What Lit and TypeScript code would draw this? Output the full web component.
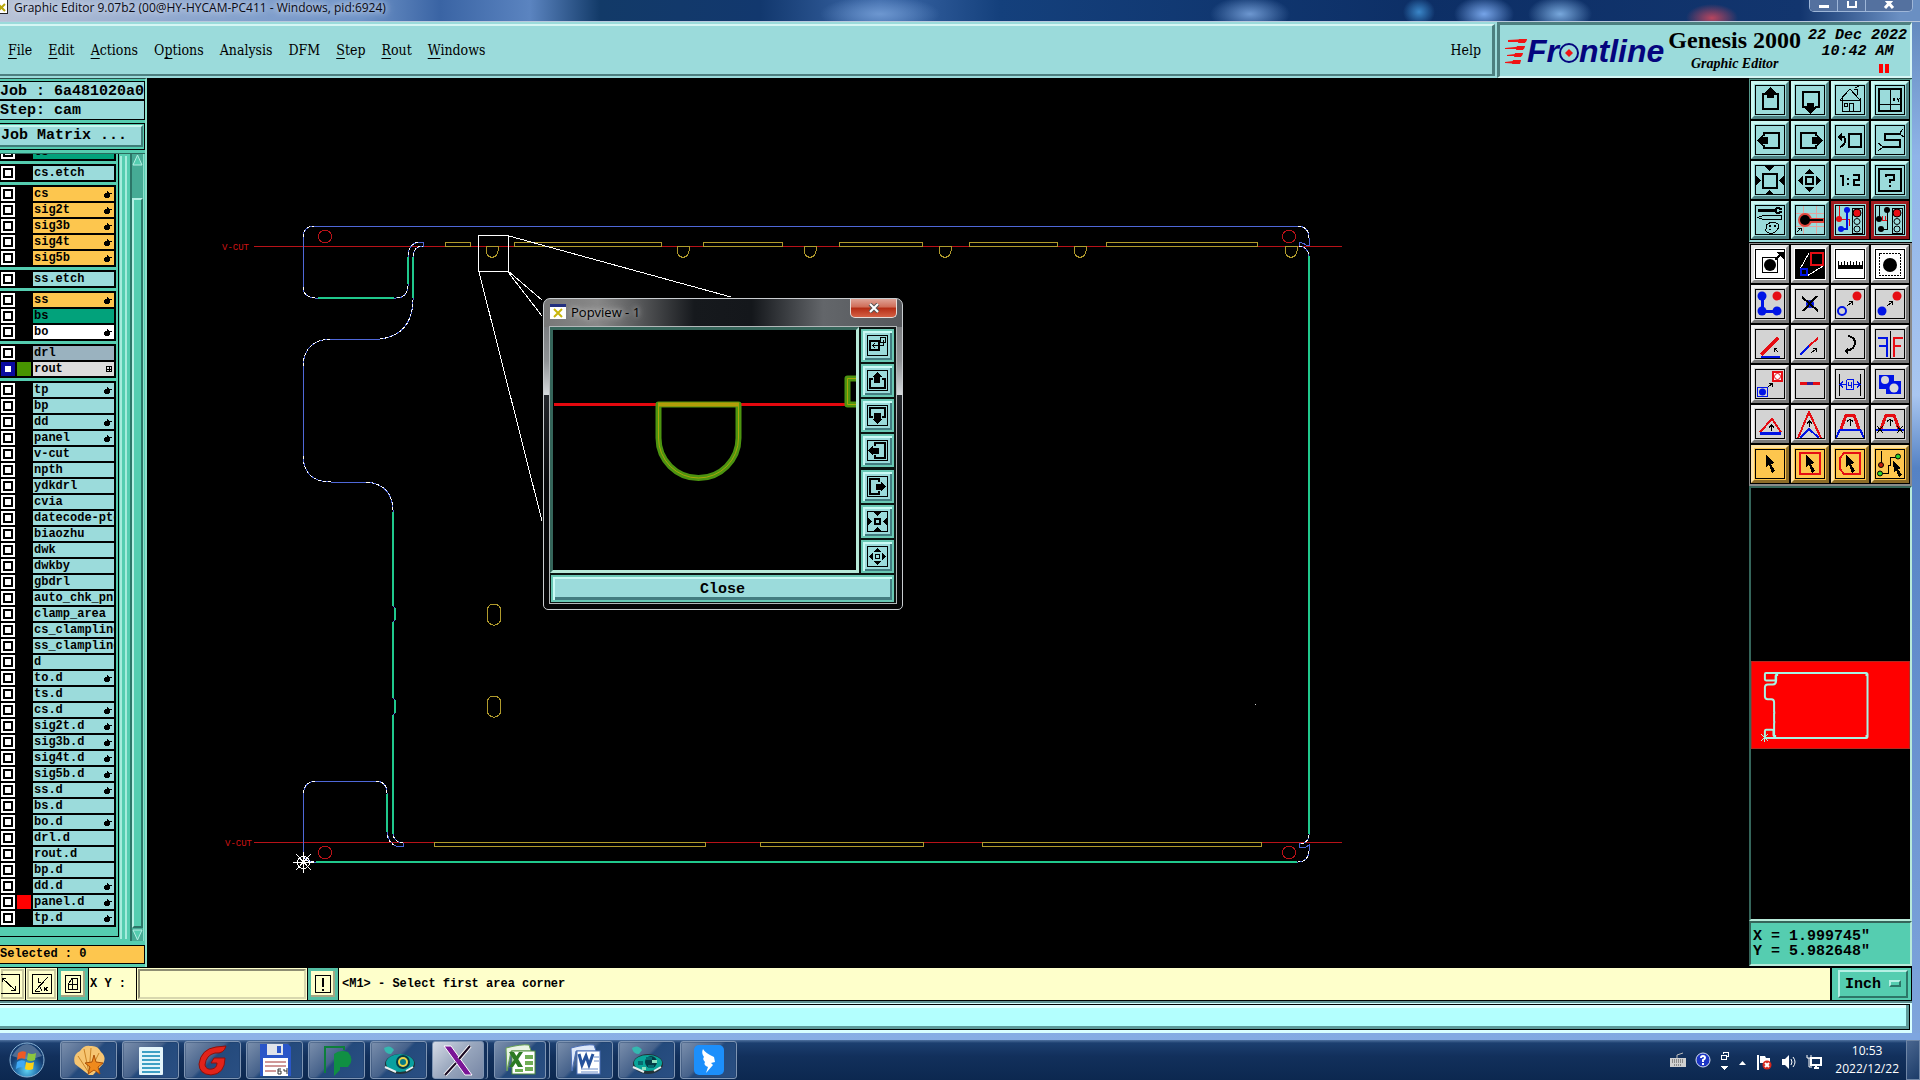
import { LitElement, html, css, svg, nothing } from "lit";
import { customElement } from "lit/decorators.js";

const K = "#000";
const R = "#e60d14";
const B = "#0014e6";

/* ---------- tool palette icons, 30 x 30 grid ---------- */
const tool: Record<string, unknown> = {
  up: svg`<path d="M12 9H8V24H23V9H19" fill="none" stroke=${K} stroke-width="2"/><path d="M15.500 2L21 8H19V13H12V8H10Z"/>`,
  down: svg`<path d="M12 22H8V7H24V22H20" fill="none" stroke=${K} stroke-width="2"/><path d="M12 18H19V22H22L15.500 29L9 22H12Z"/>`,
  home: svg`<path d="M5 15L15 4L25 15M7 13V26H25V13M5 15H26M19 4H22V10M14 26V18H18V26M9 18H12V21H9ZM20 3L24 1" fill="none" stroke=${K}/>`,
  grid: svg`<rect x="4" y="4" width="22" height="22" fill="none" stroke=${K} stroke-width="2"/><path d="M4 19.500H26M15.500 4V26M18 13l2 3M20 13l-2 3M22 13l1 2 2-2M23 15v2" fill="none" stroke=${K}/>`,
  left: svg`<path d="M9 11V8H24V23H9V20" fill="none" stroke=${K} stroke-width="2"/><path d="M2 15.500L8 10V12H13V19H8V21Z"/>`,
  right: svg`<path d="M21 11V8H6V23H21V20" fill="none" stroke=${K} stroke-width="2"/><path d="M28 15.500L22 10V12H17V19H22V21Z"/>`,
  back: svg`<rect x="14" y="9" width="12" height="13" fill="none" stroke=${K} stroke-width="2"/><path d="M5 12H8Q10 12 10 16T5 22" fill="none" stroke=${K} stroke-width="2"/><path d="M2 12L7 8V16Z"/>`,
  snake: svg`<path d="M26 9H10V15H25V22H7" fill="none" stroke=${K} stroke-width="2"/><path d="M25 8l3-4M26 10l3 2M7 21l-4-3M7 23l-4 3" stroke=${K} fill="none"/>`,
  zoomin: svg`<rect x="8" y="9" width="14" height="14" fill="none" stroke=${K} stroke-width="2"/><path d="M10 1H19L14.500 6ZM10 30H19L14.500 25ZM1 11V20L6 15.500ZM29 11V20L24 15.500Z"/>`,
  zoomout: svg`<rect x="11" y="12" width="7" height="7" fill="none" stroke=${K} stroke-width="2"/><path d="M10 9H19L14.500 4ZM10 22H19L14.500 27ZM8 11V20L3 15.500ZM21 11V20L26 15.500Z"/>`,
  ratio: svg`<path d="M5 11H8V21M18 10H24V15H19V20H25" fill="none" stroke=${K} stroke-width="2"/><path d="M12 13h2v2h-2zM12 18h2v2h-2z"/>`,
  help: svg`<rect x="4" y="4" width="22" height="22" fill="none" stroke=${K} stroke-width="2"/><path d="M11 12V10H19V15H15V18M15 20V22" fill="none" stroke=${K} stroke-width="2"/>`,
  setup: svg`<path d="M3 5H21" stroke=${K} stroke-width="3"/><path d="M27 4L22 3L20 5L22 8L27 7" fill="none" stroke=${K} stroke-width="2"/><path d="M3 12.500L8 10.500H26V14.500H8ZM11 20Q18 15 23 19Q25 25 18 28Q10 29 11 24Z" fill="none" stroke=${K}/><path d="M14 20h2v2h-2zM19 20h2v2h-2zM14 24h2v1h-2z"/>`,
  snap: svg`<path d="M0 8.500H30M0 21.500H30M8.500 0V30M21.500 0V30" stroke="#e2a5a0" fill="none"/><circle cx="10" cy="15" r="7" fill="#e0453c"/><path d="M12 15H29" stroke="#e0453c" stroke-width="5"/><circle cx="10" cy="15" r="5"/><path d="M12 15H28" stroke=${K} stroke-width="2"/><path d="M2 27L6 23M3 23H6V26" stroke=${K} fill="none"/>`,
  netA: svg`<path d="M4 1V14H8M5 14H14V21" stroke=${R} fill="none"/><path d="M12 5V24H6" stroke=${B} fill="none" stroke-width="2"/><circle cx="4" cy="14" r="3" fill=${R}/><circle cx="12" cy="5" r="3" fill=${B}/><circle cx="6" cy="24" r="3" fill=${B}/><rect x="17.500" y="3.500" width="10" height="25" fill="none" stroke=${K}/><circle cx="22" cy="8" r="4" fill=${R} stroke=${K}/><circle cx="22" cy="16.500" r="3" fill="none" stroke=${K}/><circle cx="22" cy="24" r="3" fill="none" stroke=${K}/>`,
  netB: svg`<path d="M4.500 1V14M12.500 5V24H6" stroke=${K} fill="none"/><circle cx="4" cy="14" r="3"/><circle cx="12" cy="5" r="3"/><circle cx="6" cy="24" r="3"/><path d="M7 11V15M10 11V15M7 15H12" stroke=${R} fill="none"/><rect x="17.500" y="3.500" width="10" height="25" fill="none" stroke=${K}/><circle cx="22" cy="8" r="4" fill=${R} stroke=${K}/><circle cx="22" cy="16.500" r="3" fill="none" stroke=${K}/><circle cx="22" cy="24" r="3" fill="none" stroke=${K}/>`,
  select: svg`<rect x="7.500" y="8.500" width="15" height="15" fill="none" stroke=${K}/><circle cx="15" cy="16" r="6"/><path d="M20 11L26 5" stroke=${K} stroke-width="2"/><path d="M21 3H29V10Z"/>`,
  popview: svg`<rect x="1" y="1" width="28" height="28"/><path d="M5 20L14 4M12 27L28 17" stroke="#fff" fill="none"/><rect x="16" y="4" width="12" height="12" fill="none" stroke=${R} stroke-width="2"/><rect x="6" y="20" width="6" height="6" fill="none" stroke=${B} stroke-width="2"/>`,
  ruler: svg`<path d="M3 12H4V16H6V13H7V16H9V12H10V16H12V13H13V16H15V12H16V16H18V13H19V16H21V12H22V16H24V13H25V16H27V12H28V20H3Z"/>`,
  area: svg`<rect x="4.500" y="4.500" width="21" height="22" fill="none" stroke=${K} stroke-dasharray="2 1"/><circle cx="15" cy="16" r="7"/>`,
  chain: svg`<path d="M7 7V22H22" stroke=${B} stroke-width="3" fill="none"/><circle cx="7" cy="7" r="4.500" fill=${B}/><circle cx="7" cy="22" r="4.500" fill=${B}/><circle cx="22" cy="22" r="4.500" fill=${B}/><circle cx="22" cy="7" r="4.500" fill=${R}/>`,
  remove: svg`<circle cx="15" cy="15" r="4" fill=${B}/><path d="M7 8L23 22M22 7L8 22" stroke=${K} stroke-width="2"/>`,
  copy: svg`<circle cx="7" cy="22" r="4" fill="none" stroke=${B} stroke-width="2"/><circle cx="22" cy="7" r="4.500" fill=${R}/><path d="M12 17L17 13M14 12.500H17.500V16" stroke=${K} fill="none"/>`,
  move: svg`<circle cx="7" cy="22" r="4.500" fill=${B}/><circle cx="22" cy="7" r="4.500" fill=${R}/><path d="M12 17L17 13M14 12.500H17.500V16" stroke=${K} fill="none"/>`,
  rotate: svg`<path d="M6 26L23 9" stroke=${R} stroke-width="3"/><path d="M6 28H25" stroke=${B} stroke-width="2"/><path d="M23 23L19 19M19 23V19.500H22" stroke=${K} fill="none"/>`,
  extend: svg`<path d="M5 26L14 17" stroke=${B} stroke-width="2"/><path d="M14 17L23 9" stroke=${R} stroke-width="2"/><path d="M16 24L21 20M18 19.500H21.500V23" stroke=${K} fill="none"/>`,
  turn: svg`<path d="M13 7Q20 8 20 14T11 22" fill="none" stroke=${K} stroke-width="2"/><path d="M9 22L13 18V26Z"/>`,
  mirror: svg`<path d="M15.500 2V29" stroke=${K}/><path d="M12 28V9H3M12 17H4" fill="none" stroke=${B} stroke-width="2"/><path d="M19 28V9H28M19 17H26" fill="none" stroke=${R} stroke-width="2"/>`,
  resize: svg`<rect x="18" y="3" width="9" height="9" fill="#fff" stroke=${R} stroke-width="2"/><circle cx="22.500" cy="7.500" r="3" fill="none" stroke=${R}/><rect x="2.500" y="18.500" width="10" height="9" fill="none" stroke=${B}/><circle cx="7.500" cy="23" r="3.500" fill=${B}/><path d="M13 18L17 15M14 14.500H17.500V18" stroke=${K} fill="none"/>`,
  segment: svg`<path d="M5 14H25" stroke=${R} stroke-width="3"/><path d="M12 14H18" stroke="#33209a" stroke-width="3"/>`,
  spacing: svg`<path d="M4.500 5V27M25.500 5V27" stroke=${K}/><path d="M5 15.500H11M19 15.500H25M8 12.500L5 15.500L8 18.500M22 12.500L25 15.500L22 18.500M12 10.500H18.500V20.500H11.500V10.500M13.500 13V16.500H17M16.500 13V19" stroke=${B} fill="none"/>`,
  merge: svg`<path d="M4 6H19V12H26V25H11V20H4Z" fill=${B}/><circle cx="10" cy="11" r="4" fill="#d9d9d9"/><circle cx="19" cy="19" r="4.500" fill="#d9d9d9"/>`,
  triA: svg`<path d="M5 23L17 10L26 23" stroke=${R} fill="none" stroke-width="2"/><path d="M5 24H26" stroke=${B} stroke-width="3"/><path d="M16.500 22V17M14 18.500L16.500 16L19 18.500" stroke=${K} fill="none"/>`,
  triB: svg`<path d="M3 29L14 3L26 29" stroke=${R} fill="none" stroke-width="2"/><path d="M5 29L14 20L24 29" stroke=${B} fill="none" stroke-width="2"/><path d="M14.500 18V12M12 14.500L14.500 12L17 14.500" stroke=${K} fill="none"/>`,
  trapA: svg`<path d="M6 20L11 6H19L24 20" stroke=${R} fill="none" stroke-width="3"/><path d="M1 29L5 20.500H25L29 29" stroke=${B} fill="none" stroke-width="2"/><path d="M15 17V10M12 12.500L15 10L18 12.500" stroke=${K} fill="none"/>`,
  trapB: svg`<path d="M6 20L11 6H19L24 20" stroke=${R} fill="none" stroke-width="3"/><path d="M1 20.500H29" stroke=${B} fill="none" stroke-width="2"/><path d="M15 17V10M12 12.500L15 10L18 12.500M2 17L8 24M8 17L2 24M22 17L28 24M28 17L22 24" stroke=${K} fill="none"/>`,
  pick: svg`<path d="M11 6L19 14L16 15L20 22L17 24L14 16L11 18Z"/>`,
  pickRect: svg`<rect x="5" y="4" width="20" height="21" fill="none" stroke=${R} stroke-width="2"/><path d="M11 6L19 14L16 15L20 22L17 24L14 16L11 18Z"/>`,
  pickPoly: svg`<path d="M9 4H25V25H9L5 20V9Z" fill="none" stroke=${R} stroke-width="2"/><path d="M11 6L19 14L16 15L20 22L17 24L14 16L11 18Z"/>`,
  pickNet: svg`<path d="M6.500 2V15M6 24.500H13V16H15.500V8H22" fill="none" stroke=${K}/><circle cx="6" cy="16" r="2.500" fill="#c0200c" stroke=${K}/><circle cx="5" cy="24.500" r="2.500" fill="#2bd32b" stroke=${K}/><circle cx="23" cy="7.500" r="2.500" fill="#2bd32b" stroke=${K}/><path d="M18 12L26 19L23 20L27 26L24 28L21 21L19 23Z"/>`,
};

const VIEW_TOOLS: [string, string, string][] = [
  ["up", "Pan up", "cy"], ["down", "Pan down", "cy"], ["home", "Home", "cy"], ["grid", "Coordinate window", "cy"],
  ["left", "Pan left", "cy"], ["right", "Pan right", "cy"], ["back", "Previous view", "cy"], ["snake", "Serpentine", "cy"],
  ["zoomin", "Zoom in", "cy"], ["zoomout", "Zoom out", "cy"], ["ratio", "Scale 1:2", "cy"], ["help", "Query", "cy"],
  ["setup", "Setup", "cy"], ["snap", "Snap", "cy"], ["netA", "Online DRC", "rd"], ["netB", "Net check", "rd"],
];
const EDIT_TOOLS: [string, string, string][] = [
  ["select", "Select", "wh"], ["popview", "Popview", "wh"], ["ruler", "Measure", "wh"], ["area", "Area", "wh"],
  ["chain", "Add feature", "gy"], ["remove", "Delete", "gy"], ["copy", "Copy", "gy"], ["move", "Move", "gy"],
  ["rotate", "Rotate", "gy"], ["extend", "Extend", "gy"], ["turn", "Turn", "gy"], ["mirror", "Mirror", "gy"],
  ["resize", "Resize", "gy"], ["segment", "Segment", "gy"], ["spacing", "Spacing", "gy"], ["merge", "Merge", "gy"],
  ["triA", "Move corner", "gy"], ["triB", "Stretch corner", "gy"], ["trapA", "Parallel move", "gy"], ["trapB", "Parallel cut", "gy"],
  ["pick", "Pick single", "or"], ["pickRect", "Pick in frame", "or"], ["pickPoly", "Pick in polygon", "or"], ["pickNet", "Pick net", "or"],
];

/* ---------- popview icons, 21 x 21 grid ---------- */
const POP_TOOLS: [string, unknown][] = [
  ["Copy view", svg`<rect x="3" y="6" width="9" height="9" fill="none" stroke=${K} stroke-width="2"/><path d="M13.500 2.500H18.500V7.500H13.500ZM16.500 5V10.500H6M8 8L5.500 10.500L8 13" fill="none" stroke=${K}/>`],
  ["Pan up", svg`<path d="M6 9H3V18H18V9H15" fill="none" stroke=${K} stroke-width="2"/><path d="M10.500 2L15 7H13V13H7V7H6Z"/>`],
  ["Pan down", svg`<path d="M6 12H3V3H18V12H15" fill="none" stroke=${K} stroke-width="2"/><path d="M7 8H14V14H16L10.500 19L5 14H7Z"/>`],
  ["Pan left", svg`<path d="M8 6V3H18V18H8V15" fill="none" stroke=${K} stroke-width="2"/><path d="M1 10.500L6 6V8H12V14H6V16Z"/>`],
  ["Pan right", svg`<path d="M12 6V3H3V18H12V15" fill="none" stroke=${K} stroke-width="2"/><path d="M19 10.500L14 6V8H9V14H14V16Z"/>`],
  ["Zoom in", svg`<rect x="8" y="8" width="5" height="5" fill="none" stroke=${K} stroke-width="2"/><path d="M6 1H15L10.500 5ZM6 20H15L10.500 16ZM1 6V15L5 10.500ZM20 6V15L16 10.500Z"/>`],
  ["Zoom out", svg`<rect x="8.500" y="8.500" width="4" height="4" fill="none" stroke=${K}/><path d="M7 6H14L10.500 2ZM7 15H14L10.500 19ZM6 7V14L2 10.500ZM15 7V14L19 10.500Z"/>`],
];

/* ---------- layers: [name, tone, mark, swatch] ---------- */
type Layer = [string, string, string?, string?];
const LAYERS: Layer[][] = [
  [["ts", "green"]],
  [["cs.etch", ""]],
  [["cs", "amber", "hand"], ["sig2t", "amber", "hand"], ["sig3b", "amber", "hand"], ["sig4t", "amber", "hand"], ["sig5b", "amber", "hand"]],
  [["ss.etch", ""]],
  [["ss", "amber", "hand"], ["bs", "green"], ["bo", "white", "hand"]],
  [["drl", "slate"], ["rout", "grey", "grid", "olive"]],
  [
    ["tp", "", "hand"], ["bp", ""], ["dd", "", "hand"], ["panel", "", "hand"], ["v-cut", ""], ["npth", ""], ["ydkdrl", ""],
    ["cvia", ""], ["datecode-ptc", ""], ["biaozhu", ""], ["dwk", ""], ["dwkby", ""], ["gbdrl", ""], ["auto_chk_pnl", ""],
    ["clamp_area", ""], ["cs_clampline", ""], ["ss_clampline", ""], ["d", ""], ["to.d", "", "hand"], ["ts.d", ""],
    ["cs.d", "", "hand"], ["sig2t.d", "", "hand"], ["sig3b.d", "", "hand"], ["sig4t.d", "", "hand"], ["sig5b.d", "", "hand"],
    ["ss.d", "", "hand"], ["bs.d", ""], ["bo.d", "", "hand"], ["drl.d", ""], ["rout.d", ""], ["bp.d", ""],
    ["dd.d", "", "hand"], ["panel.d", "", "hand", "red"], ["tp.d", "", "hand"],
  ],
];

/* ---------- board geometry ---------- */
const BOARD =
  "M314 226H1298Q1309 227 1309 238V245H1306Q1303 242 1299 243V246Q1308 247 1309 256V835Q1308 844 1299 844V847H1306L1309 845V851Q1308 862 1298 862H314Q303 862 303 852V793Q305 782 315 781H376Q387 782 387 793V833Q389 843 396 846H403V843Q394 842 393 834V715L395 713V700L393 698V622L395 620V608L393 606V510Q392 484 366 482H331Q304 482 303 456V366Q304 340 331 339H380Q412 335 413 300V256Q414 246 423 246V242H418Q408 245 408 256V286Q407 298 396 298H315Q303 297 303 287V237Q303 227 314 226Z";
const BOARD_ARCS =
  "M303 237Q303 227 314 226M1298 226Q1309 227 1309 238M1299 246Q1308 247 1309 256M1309 835Q1308 844 1299 844M1309 851Q1308 862 1298 862M314 862Q303 862 303 852M303 793Q305 782 315 781M376 781Q387 782 387 793M387 835Q389 843 396 846M403 843Q394 842 393 834M393 510Q392 484 366 482M331 482Q304 482 303 456M303 366Q304 340 331 339M380 339Q412 335 413 300M413 256Q414 246 423 246M418 242Q408 245 408 256M408 286Q407 298 396 298M315 298Q303 297 303 287";
const BOARD_GREEN =
  "M1309 256V834M387 794V832M393 834V715M395 713V700M393 698V622M395 620V608M393 606V512M413 298V257M408 257V284M318 298H394M316 862H1297";

const TOP_BARS = [[445, 470], [514, 661], [703, 782], [839, 922], [969, 1057], [1106, 1257]];
const BOTTOM_BARS = [[434, 705], [760, 923], [982, 1261]];
const HALF_SLOTS = [492, 683, 810, 945, 1080, 1291];

/* ---------- taskbar ---------- */
const TASKS: [string, unknown, string?][] = [
  ["Shell", svg`<path d="M17 32L3 21Q0 12 8 8Q12 2 18 3Q26 2 29 9Q35 14 31 21L21 32Z" fill="#f6c572"/><path d="M17 30L6 13M17 30L12 6M17 30L19 5M17 30L27 10" stroke="#c98325" fill="none"/><path d="M22 12L24 19L31 20L26 24L28 31L22 27L16 31L18 24L13 20L20 19Z" fill="#ef8a1c" stroke="#a84f08"/>`],
  ["Notepad", svg`<rect x="5" y="4" width="24" height="28" rx="1" fill="#e4f5fb"/><path d="M8 9H26M8 13H26M8 17H26M8 21H26M8 25H26M8 29H26" stroke="#3f9fc4" stroke-width="2"/>`],
  ["Genesis", svg`<path d="M30 3Q28 11 19 10Q10 12 9 22Q10 27 16 26Q21 25 21 20H15L18 15H29Q29 31 15 32Q3 31 3 21Q5 6 20 4Z" fill="#e2231a" stroke="#8d100c"/>`],
  ["Disk", svg`<path d="M2 1H30L33 4V33H2Z" fill="#2a56c8"/><rect x="9" y="1" width="16" height="11" fill="#dfe3ea"/><rect x="19" y="3" width="4" height="7" fill="#2a56c8"/><rect x="5" y="15" width="25" height="18" fill="#fff"/><path d="M7 19H28M7 23H28M7 28H18" stroke="#a03030"/><path d="M20 26H23M20 26V31H23V28H20M26 26V28H29M29 25V31" stroke="#333" fill="none"/>`],
  ["Plot", svg`<path d="M5 30V4H24V7" fill="none" stroke="#0d7f3b" stroke-width="2"/><path d="M14 33V11Q20 6 28 9Q35 17 28 24H20V27Z" fill="#108f43"/>`],
  ["InCAM", svg`<ellipse cx="18" cy="21" rx="15" ry="10" fill="#243238"/><ellipse cx="18" cy="20" rx="14" ry="9" fill="#0aa0a0"/><circle cx="21" cy="19" r="7" fill="#043c48"/><circle cx="21" cy="19" r="5" fill="#e8d44a"/><circle cx="21" cy="19" r="3" fill="#067b86"/><path d="M2 5Q8 1 12 7L9 11Q3 11 2 5Z" fill="#35b8b0"/><path d="M3 24L14 29M24 28L31 24" stroke="#e8eef0" stroke-width="2"/>`],
  ["Xming", svg`<path d="M3 3H10L31 32H24Z" fill="#7a1596" stroke="#fff"/><path d="M29 3L18 16M15 20L4 32" stroke="#fff" stroke-width="4"/><path d="M29 3L18 16M15 20L4 32" stroke="#1a0a22" stroke-width="2"/>`, "active"],
  ["Excel", svg`<path d="M3 5Q18 1 26 2L28 8H8L4 28Z" fill="#e8f3e4" stroke="#6aa355"/><rect x="9" y="8" width="23" height="23" fill="#fff" stroke="#4c8d3a"/><path d="M6 9H11L20 24H15ZM16 9H20L10 24H6Z" fill="#2c7a22"/><path d="M22 12H30V16H22ZM22 18H30V22H22ZM22 24H30V28H22ZM12 26H20V29H12Z" fill="#6fae55"/>`, "stack"],
  ["Word", svg`<path d="M3 5Q18 1 26 2L28 8H8L4 28Z" fill="#dde8f8" stroke="#4c70b8"/><rect x="9" y="8" width="23" height="23" fill="#fff" stroke="#4c70b8"/><path d="M11 11L14 22L18 13L21 22L25 11" fill="none" stroke="#26529c" stroke-width="3"/><path d="M26 14H31M26 18H31M13 26H30M13 29H30" stroke="#6a8cc8"/>`],
  ["InCAM two", svg`<ellipse cx="18" cy="21" rx="15" ry="10" fill="#243238"/><ellipse cx="18" cy="20" rx="14" ry="8" fill="#0aa59a"/><circle cx="21" cy="19" r="6" fill="#043c48"/><path d="M8 18h5v4h-5zM16 14h6v3h-6zM18 22h6v3h-6z" fill="#066a70"/><path d="M22 17h5v3h-5zM12 24h4v3h-4z" fill="#8ce0c0"/><path d="M3 24L14 29M24 28L31 24" stroke="#e8eef0" stroke-width="2"/><path d="M2 5Q8 1 12 7L9 11Q3 11 2 5Z" fill="#35b8b0"/>`],
  ["DingTalk", svg`<rect x="2" y="2" width="30" height="30" rx="5" fill="#1c8ffb"/><path d="M11 6Q13 10 22 14L23 19L19 20L21 22L14 30L16 24Q11 22 13 19Q10 16 12 14Q9 10 11 6Z" fill="#fff"/>`],
];

const bevel = css`
  * { box-sizing: border-box; }
  button, select, input { font: inherit; color: inherit; margin: 0; padding: 0; border-radius: 0; }
  svg { display: block; }
  .crisp { shape-rendering: crispEdges; }
`;

@customElement("app-header")
class AppHeader extends LitElement {
  static styles = [bevel, css`
    :host { display: flex; flex: none; height: 56px; background: #9bdbdb; font-family: "DejaVu Serif Condensed", "Liberation Serif", serif; color: #000; }
    .menus { flex: 1; display: flex; align-items: center; gap: 16px; padding: 0 11px 0 8px; border-top: 2px solid #d6f6f4; border-right: 3px solid #4d7f80; border-bottom: 2px solid #4d7f80; margin: 2px 2px 2px 0; }
    .menus button { border: 0; background: none; font-size: 14px; line-height: 18px; white-space: nowrap; }
    .menus u { text-underline-offset: 3px; text-decoration-thickness: 1px; }
    .menus .help { margin-left: auto; }
    .brand { width: 415px; flex: none; display: flex; align-items: center; padding: 0 3px 0 5px; border: 2px solid #d6f6f4; border-top: 3px solid #4d7f80; border-left: 3px solid #4d7f80; }
    .logo { display: flex; align-items: center; color: #05057e; font: italic bold 32px/36px "Liberation Sans", sans-serif; }
    .product { display: flex; flex-direction: column; align-items: center; padding: 0 4px 2px; white-space: nowrap; font-family: "Liberation Serif", serif; font-weight: bold; }
    .name { font-size: 24px; line-height: 28px; }
    .sub { font-size: 14px; line-height: 20px; font-style: italic; }
    .time { display: flex; flex-direction: column; align-items: center; font: italic bold 15px/16px "Liberation Mono", monospace; white-space: nowrap; margin-left: auto; }
    .pause { display: flex; gap: 2px; align-self: flex-end; margin: 4px 18px 0 0; }
    .pause i { width: 4px; height: 9px; background: #f00; }
  `];
  render() {
    const menus = [["", "F", "ile"], ["", "E", "dit"], ["", "A", "ctions"], ["O", "p", "tions"], ["Analysis", "", ""], ["DFM", "", ""], ["", "S", "tep"], ["", "R", "out"], ["", "W", "indows"]];
    return html`
      <nav class="menus">
        ${menus.map(([a, u, b]) => html`<button>${a}${u ? html`<u>${u}</u>` : nothing}${b}</button>`)}
        <button class="help">Help</button>
      </nav>
      <div class="brand">
        <div class="logo">
          <svg width="22" height="26" viewBox="0 0 22 26"><path d="M3 2L22 1L21 4L3 4ZM0 10L20 8L19 11L0 11ZM2 17L18 15L17 18L2 18ZM0 24L16 22L15 26L0 25Z" fill="#f01414"/><path d="M14 1H22L20 5H13ZM12 8H20L18 12H11ZM10 15H18L16 19H9ZM8 22H16L14 26H7Z" fill="#f01414"/></svg>
          <span>Fr</span>
          <svg width="20" height="24" viewBox="0 0 20 24"><circle cx="10" cy="14" r="9" fill="none" stroke="#05057e" stroke-width="2"/><path d="M10 10L14 14L10 18L6 14Z" fill="#f01414"/></svg>
          <span>ntline</span>
        </div>
        <div class="product"><span class="name">Genesis 2000</span><span class="sub">Graphic Editor</span></div>
        <div class="time"><span>22 Dec 2022</span><span>10:42 AM</span><span class="pause"><i></i><i></i></span></div>
      </div>`;
  }
}

@customElement("layer-panel")
class LayerPanel extends LitElement {
  static styles = [bevel, css`
    :host { display: flex; flex-direction: column; width: 147px; flex: none; background: #55cdb0; border-right: 2px solid #8ee0cc; border-top: 1px solid #2b4f4a; padding: 2px 0 3px; font: bold 15px/19px "Liberation Mono", monospace; color: #000; overflow: hidden; white-space: nowrap; }
    .job { display: flex; flex-direction: column; border: 1px solid #000; border-left: 0; background: #9bdbdb; }
    .job span { height: 18px; border-bottom: 1px solid #000; }
    .job span + span { border-top: 1px solid #000; border-bottom: 0; height: 19px; }
    .matrix { margin-top: 3px; border: 1px solid #000; border-left: 0; padding: 1px 1px 2px 0; }
    .matrix button { display: block; width: 100%; height: 22px; text-align: left; padding-left: 1px; background: #9bdbdb; border: 2px solid; border-color: #c9f5ef #3f7d78 #3f7d78 #c9f5ef; border-left: 0; font-weight: bold; line-height: 18px; }
    .body { flex: 1; min-height: 0; display: flex; margin-top: 3px; border-top: 1px solid #2b6a5e; }
    .list { width: 119px; border-right: 1px solid #000; border-bottom: 1px solid #000; margin-bottom: 4px; overflow: hidden; font-size: 12px; line-height: 14px; }
    .group { width: 116px; background: #000; padding: 2px 2px 0 1px; margin-bottom: 3px; }
    .group:first-child { margin-top: -11px; }
    .row { display: flex; gap: 2px; padding-bottom: 2px; height: 16px; }
    .row input { appearance: none; width: 14px; height: 14px; border: 2px solid #fff; outline: 2px solid #000; outline-offset: -4px; background: #fff; flex: none; }
    .row input:checked { border-color: #0a0aa0; outline-color: #0a0aa0; }
    .swatch { width: 14px; height: 14px; flex: none; }
    .olive { background: #479400; } .red { background: #f00; }
    .row label { flex: 1; min-width: 0; overflow: hidden; display: flex; justify-content: space-between; align-items: center; background: #9bdbdb; padding: 0 0 0 1px; height: 14px; }
    .row label span { min-width: 0; }
    .row .amber { background: #fdc64e; } .row .green { background: #02a27b; } .row .white { background: #fff; } .row .slate { background: #9ab2bf; } .row .grey { background: #dcdcdc; }
    .row svg { flex: none; margin-right: 2px; }
    .gutter { width: 7px; margin: 2px 0 2px 1px; border-left: 2px solid #a5ecdc; border-right: 2px solid #a5ecdc; }
    .scroll { width: 14px; margin-left: auto; margin-right: 1px; display: flex; flex-direction: column; background: #46ab95; border-left: 2px solid #2c7668; border-right: 1px solid #8ee0cc; }
    .thumb { flex: 1; margin-top: 32px; background: #55cdb0; border: 2px solid; border-color: #b5f0e4 #2c7668 #2c7668 #b5f0e4; }
    .selected { margin-top: 4px; height: 19px; border: 1px solid #000; border-left: 0; background: #fdc64e; font-size: 12px; line-height: 17px; }
  `];
  render() {
    const hand = html`<svg class="crisp" width="8" height="8" viewBox="0 0 8 8"><path d="M3 1h1v1h1v1h3v1H6v3H5v1H1V7H0V4h1V3h2z"/></svg>`;
    const grid = html`<svg class="crisp" width="6" height="6" viewBox="0 0 6 6"><path d="M0 0H6V6H0ZM1 1V2.500H2.500V1ZM3.500 1V2.500H5V1ZM1 3.500V5H2.500V3.500ZM3.500 3.500V5H5V3.500Z" fill-rule="evenodd"/></svg>`;
    return html`
      <div class="job"><span>Job : 6a481020a0</span><span>Step: cam</span></div>
      <div class="matrix"><button>Job Matrix ...</button></div>
      <div class="body">
        <div class="list">
          ${LAYERS.map((g) => html`<div class="group">${g.map(([name, tone, mark, sw]) => html`
            <div class="row"><input type="checkbox" id="l-${name}" .checked=${name === "rout"}><i class="swatch ${sw ?? ""}"></i><label class=${tone} for="l-${name}"><span>${name}</span>${mark === "hand" ? hand : mark ? grid : nothing}</label></div>`)}</div>`)}
        </div>
        <div class="gutter"></div>
        <div class="scroll">
          <svg width="11" height="12" viewBox="0 0 11 12"><path d="M5.500 1L10 11H1Z" fill="#55cdb0" stroke="#b5f0e4"/></svg>
          <div class="thumb"></div>
          <svg width="11" height="13" viewBox="0 0 11 13"><path d="M5.500 12L10 2H1Z" fill="#55cdb0" stroke="#b5f0e4"/></svg>
        </div>
      </div>
      <div class="selected">Selected : 0</div>`;
  }
}

@customElement("pop-view")
class PopView extends LitElement {
  static styles = [bevel, css`
    :host { display: flex; flex-direction: column; width: 360px; height: 312px; border: 1px solid #c9cdd0; border-radius: 7px 7px 5px 5px; overflow: hidden; padding: 0 5px 5px; color: #000;
      background: linear-gradient(90deg, #777 0, #888 15%, #16191d 42%, #14171b 58%, #63666a 78%, #55585c 100%) top / 100% 28px no-repeat, linear-gradient(#6a6d70 0, #8f9295 20%, #d6dadd 31%, #d6dadd 31%, #23262b 31%, #08090b 60%, #050506 100%); }
    .title { height: 27px; flex: none; display: flex; align-items: center; gap: 5px; padding: 0 0 2px 1px; font: 13px/16px "Open Sans", "Noto Sans", sans-serif; }
    .title span { flex: 1; text-shadow: 0 0 5px #ccc, 0 0 8px #bbb; }
    .x { align-self: flex-start; width: 47px; height: 19px; background: linear-gradient(#dfa396, #cf6c57 45%, #b42c14 50%, #d56044); border: 1px solid #e6dcd8; border-top: 0; border-radius: 0 0 5px 5px; display: grid; place-items: center; }
    .frame { flex: 1; min-height: 0; display: flex; flex-direction: column; gap: 2px; background: #0a1512; border: 1px solid #b4b8ba; padding: 0 2px 1px 0; }
    .mid { flex: 1; min-height: 0; display: flex; gap: 2px; }
    .view { flex: 1; background: #000; border: 3px solid; border-color: #35655a #b7ead9 #b7ead9 #35655a; }
    .tools { display: flex; flex-direction: column; justify-content: space-between; padding-top: 2px; }
    .tools button { width: 33px; height: 33px; background: #9bdbdb; border: 2px solid #69c8b4; box-shadow: inset 2px 2px #c9faf5, inset -2px -2px #437c80; padding: 4px; display: grid; place-items: center; }
    .tools svg { outline: 1px solid #000; outline-offset: -1px; }
    .close { height: 27px; margin-left: 1px; padding-top: 2px; background: #9bdbdb; border: 2px solid #69c8b4; box-shadow: inset 2px 2px #c9faf5, inset -2px -3px #437c80; font: bold 15px/20px "Liberation Mono", monospace; }
  `];
  render() {
    return html`
      <div class="title">
        <svg width="16" height="15" viewBox="0 0 16 15"><rect width="16" height="15" fill="#fff"/><rect width="16" height="3" fill="#23307e"/><path d="M4 5L12 13M12 5L4 13" stroke="#c9b60c" stroke-width="2"/></svg>
        <span>Popview - 1</span>
        <button class="x" aria-label="Close window"><svg width="12" height="10" viewBox="0 0 12 10"><path d="M2 1L10 9M10 1L2 9" stroke="#555" stroke-width="4"/><path d="M2 1L10 9M10 1L2 9" stroke="#fff" stroke-width="2"/></svg></button>
      </div>
      <div class="frame">
        <div class="mid">
          <div class="view">
            <svg width="100%" height="100%">
              <path d="M1 74.500H600" stroke="#e4080e" stroke-width="3"/>
              <path d="M105.500 74.500H185.500V108A40 40 0 0 1 105.500 108Z" fill="none" stroke="#4c9410" stroke-width="6" stroke-linejoin="round"/>
              <path d="M105 74.500H186" stroke="#b89a08" stroke-width="4"/>
              <path d="M105.500 74.500H185.500V108A40 40 0 0 1 105.500 108Z" fill="none" stroke="#a8a408"/>
              <path d="M305 48.500H294.500V74.500H305" fill="none" stroke="#4c9410" stroke-width="6" stroke-linejoin="round"/>
              <path d="M305 48.500H294.500V74.500H305" fill="none" stroke="#a8a408"/>
            </svg>
          </div>
          <div class="tools">${POP_TOOLS.map(([n, i]) => html`<button aria-label=${n}><svg class="crisp" width="21" height="21" viewBox="0 0 21 21">${i}</svg></button>`)}</div>
        </div>
        <button class="close">Close</button>
      </div>`;
  }
}

@customElement("board-stage")
class BoardStage extends LitElement {
  static styles = [bevel, css`
    :host { display: block; flex: 1; min-width: 0; position: relative; background: #000; overflow: hidden; }
    .art { position: absolute; inset: 0; width: 100%; height: 100%; }
    .cut { font: 9px "Liberation Mono", monospace; fill: #d01414; }
    pop-view { position: absolute; left: 396px; top: 220px; }
  `];
  render() {
    return html`
      <svg class="art crisp">
        <g transform="translate(-147 -78)" fill="none">
          <path d="M254 246.500H1342M254 842.500H1342" stroke="#b81218"/>
          <text class="cut" x="222" y="250">V-CUT</text>
          <text class="cut" x="225" y="846">V-CUT</text>
          ${[[325, 236.5], [1289, 236.5], [325, 852.5], [1289, 852.5]].map(([x, y]) => svg`<circle cx=${x} cy=${y} r="6.500" stroke="#b81218"/>`)}
          <path d=${BOARD} stroke="#4f68d8"/>
          <path d=${BOARD_ARCS} stroke="#fff" stroke-dasharray="3 2"/>
          <path d=${BOARD_GREEN} stroke="#20c88c" stroke-width="2"/>
          ${TOP_BARS.map(([a, b]) => svg`<rect x=${a} y="242.500" width=${b - a} height="4" stroke="#b09a2c"/>`)}
          ${BOTTOM_BARS.map(([a, b]) => svg`<rect x=${a} y="842.500" width=${b - a} height="4" stroke="#b09a2c"/>`)}
          ${HALF_SLOTS.map((x) => svg`<path d="M${x - 6} 246.500H${x + 6}V251Q${x + 5} 257 ${x} 257.500Q${x - 5} 257 ${x - 6} 251Z" stroke="#b09a2c"/>`)}
          <rect x="487.500" y="604" width="13" height="21" rx="6" stroke="#b09a2c"/>
          <rect x="487.500" y="696" width="13" height="21" rx="6" stroke="#b09a2c"/>
          <rect x="478.500" y="235.500" width="30" height="36" stroke="#fff"/>
          <path d="M509 236L731 297M479 272L542 521M508 271L542 300M508 272L542 316" stroke="#fff"/>
          <path d="M293 862.500H314M303.500 852V873M296 854L311 870M311 854L296 870" stroke="#fff"/>
          <circle cx="303.500" cy="862.500" r="6" stroke="#fff"/>
          <rect x="1255" y="704" width="1" height="1" fill="#ccc"/>
        </g>
      </svg>
      <pop-view></pop-view>`;
  }
}

@customElement("tool-dock")
class ToolDock extends LitElement {
  static styles = [bevel, css`
    :host { display: flex; flex-direction: column; width: 163px; flex: none; background: #000; border-top: 1px solid #2b4f4a; font: bold 15px/15px "Liberation Mono", monospace; color: #000; }
    .pad { display: grid; grid-template-columns: repeat(4, 38px); gap: 2px; background: #000; padding: 1px; border: 1px solid #55998c; border-right: 2px solid #9bdbdb; border-bottom: 2px solid #9bdbdb; }
    .pad.edit { border-color: #8a8a8a; margin-top: 1px; }
    .pad button { width: 38px; height: 38px; border: 3px solid; display: grid; place-items: center; }
    .pad svg { outline: 1px solid #000; outline-offset: -1px; }
    circle { shape-rendering: auto; }
    .cy { background: #9bdbdb; border-color: #caf7f2 #4f8284 #4f8284 #caf7f2 !important; }
    .rd { background: #9bdbdb; border-color: #a31c20 #8e1418 #8e1418 #a31c20 !important; }
    .wh { background: #fff; border-color: #e8e8e8 #909090 #909090 #e8e8e8 !important; }
    .gy { background: #d3d3d3; border-color: #f2f2f2 #7a7a7a #7a7a7a #f2f2f2 !important; }
    .or { background: #fdc64e; border-color: #ffe3a4 #8c6c28 #8c6c28 #ffe3a4 !important; }
    .preview { flex: 1; display: flex; align-items: center; padding-top: 2px; border: 2px solid; border-color: #35655a #b7ead9 #b7ead9 #35655a; background: #000; }
    .preview div { width: 100%; height: 88px; background: #f00; outline: 1px solid #b02a20; outline-offset: -1px; }
    .coords { height: 45px; margin-bottom: 1px; background: #55cdb0; border: 2px solid; border-color: #35655a #b7ead9 #b7ead9 #35655a; padding: 6px 2px; white-space: nowrap; display: flex; flex-direction: column; }
  `];
  private pad(list: [string, string, string][]) {
    return list.map(([id, label, tone]) => html`<button class=${tone} aria-label=${label}><svg class="crisp" width="30" height="30" viewBox="0 0 30 30">${tool[id]}</svg></button>`);
  }
  render() {
    return html`
      <div class="pad">${this.pad(VIEW_TOOLS)}</div>
      <div class="pad edit">${this.pad(EDIT_TOOLS)}</div>
      <div class="preview"><div>
        <svg width="159" height="88" viewBox="0 0 159 88">
          <g fill="none" stroke="#a8f4e4" stroke-width="2" transform="translate(-17 -11) scale(0.102)"><path d=${BOARD} vector-effect="non-scaling-stroke"/></g>
          <path d="M10 73L17 80M17 73L10 80M13.500 71V81" stroke="#a8f4e4" fill="none"/>
        </svg></div></div>
      <div class="coords"><span>X = 1.999745"</span><span>Y = 5.982648"</span></div>`;
  }
}

@customElement("status-row")
class StatusRow extends LitElement {
  static styles = [bevel, css`
    :host { display: block; flex: none; background: #000; color: #000; font: bold 12px/16px "Liberation Mono", monospace; }
    .line { display: flex; height: 34px; padding: 1px 0; gap: 1px; background: #000; white-space: nowrap; }
    .sq { width: 31px; flex: none; display: grid; place-items: center; background: #feffcb; border: 1px solid #feffcb; box-shadow: inset 0 0 0 2px #c9c9a0; }
    .sq.first { width: 25px; justify-content: start; }
    .sq.on { border: 3px solid #55bfa4; width: 30px; box-shadow: inset -2px -2px #a5a583; }
    .xy { width: 47px; background: #feffcb; padding: 8px 1px 0; flex: none; }
    .entry { width: 170px; height: 32px; background: #feffcb; border: 3px solid; border-color: #8e8e72 #d8d8ae #d8d8ae #8e8e72; outline: 1px solid #feffcb; outline-offset: -1px; padding-left: 4px; }
    .msg { flex: 1; background: #feffcb; padding: 8px 3px; }
    .unit { width: 79px; display: flex; background: #55cdb0; padding: 2px 3px 2px 6px; margin: 0 1px; position: relative; }
    .unit select { appearance: none; flex: 1; background: #55cdb0; border: 2px solid; border-color: #b5f0e4 #2c7668 #2c7668 #b5f0e4; padding: 1px 0 0 5px; font-size: 15px; font-weight: bold; }
    .unit i { position: absolute; right: 10px; top: 12px; width: 12px; height: 7px; border: 2px solid; border-color: #b5f0e4 #2c7668 #2c7668 #b5f0e4; pointer-events: none; }
    .strip { height: 32px; border-top: 2px solid #5f8f90; padding: 1px 2px 3px 0; background: #d8ffff; }
    .strip div { height: 26px; background: #b3fffe; border: 1px solid #000; border-left: 0; box-shadow: inset -3px -3px #5f9a9a, inset 0 3px #e0ffff; }
  `];
  render() {
    return html`
      <div class="line">
        <button class="sq first" aria-label="Line mode"><svg class="crisp" width="21" height="22" viewBox="0 0 21 22"><path d="M-1 1.500H18.500V20.500H-1M1 5L14 17M1 9V5H5M14 13V17H10" fill="none" stroke="#000"/></svg></button>
        <button class="sq" aria-label="Angle mode"><svg class="crisp" width="20" height="22" viewBox="0 0 20 22"><path d="M0.500 1.500H19.500V20.500H0.500ZM3 18L16 4M3 18H8M8 14L10 18M6 5V9H9M12 14V18M16 14L13 16L16 18" fill="none" stroke="#000"/></svg></button>
        <button class="sq on" aria-label="Grid mode"><svg class="crisp" width="18" height="20" viewBox="0 0 18 20"><path d="M1.500 1.500H16.500V18.500H1.500ZM4 10.500L8 4.500H13.500V15.500H4ZM8.500 4V16M4 10.500H14" fill="none" stroke="#000"/></svg></button>
        <label class="xy" for="xy">X Y :</label>
        <input class="entry" id="xy" value="">
        <button class="sq on" aria-label="Alert"><svg class="crisp" width="18" height="20" viewBox="0 0 18 20"><path d="M1.500 1.500H16.500V18.500H1.500Z" fill="none" stroke="#000"/><path d="M8 4H10V13H8ZM8 15H10V17H8Z"/></svg></button>
        <div class="msg">&lt;M1&gt; - Select first area corner</div>
        <div class="unit"><select aria-label="Units"><option>Inch</option><option>MM</option></select><i></i></div>
      </div>
      <div class="strip"><div></div></div>`;
  }
}

@customElement("task-bar")
class TaskBar extends LitElement {
  static styles = [bevel, css`
    :host { display: flex; height: 40px; flex: none; align-items: stretch; background: linear-gradient(#4f719e 0, #1c3f70 3px, #12305c 40%, #0c2850 100%); color: #fff; font: 12px/18px "Open Sans", "Noto Sans", sans-serif; }
    .start { width: 60px; border: 0; background: none; padding: 2px 0 0 8px; }
    .tasks { flex: 1; display: flex; gap: 5px; padding: 1px 0; }
    .tasks button { width: 57px; display: grid; place-items: center; border: 1px solid #7f95b3; border-radius: 3px; background: linear-gradient(135deg, #7c90ad 0, #46628b 45%, #244a7c 50%, #2a4f83 100%); box-shadow: inset 0 0 0 1px #18365f55; }
    .tasks .active { width: 52px; margin-right: 5px; background: linear-gradient(135deg, #d5dbe6, #98a6bd 50%, #7686a5); box-shadow: 3px 0 #12305c, 4px 0 #7f95b3; }
    .tasks .stack { width: 52px; margin-right: 5px; box-shadow: 3px 0 #12305c, 4px 0 #7f95b3; }
    .tray { display: flex; align-items: center; gap: 9px; padding: 2px 13px 0 0; }
    .clock { display: flex; flex-direction: column; align-items: center; padding: 2px 7px 0 0; }
    .peek { width: 14px; border: 1px solid #6f86a6; background: linear-gradient(135deg, #4a668f, #1c3c69); padding: 0; }
  `];
  render() {
    return html`
      <button class="start" aria-label="Start"><svg width="38" height="38" viewBox="0 0 38 38">
        <defs><radialGradient id="orb" cx="50%" cy="80%"><stop offset="0" stop-color="#5fd4f4"/><stop offset="0.600" stop-color="#2675b0"/><stop offset="1" stop-color="#143c70"/></radialGradient></defs>
        <circle cx="19" cy="18" r="17" fill="url(#orb)" stroke="#8cb6d8"/><path d="M4 14Q19 -10 34 14Q19 20 4 14Z" fill="#fff" opacity="0.250"/>
        <path d="M10 11Q14 8 18 10L17 17Q13 15 9 18Z" fill="#ee5a24"/><path d="M20 11Q24 13 28 11L27 18Q23 20 19 18Z" fill="#8cc63f"/><path d="M9 20Q13 17 17 19L16 26Q12 24 8 27Z" fill="#3fa9f5"/><path d="M18 20Q22 22 26 20L25 27Q21 29 17 27Z" fill="#fcd116"/></svg></button>
      <div class="tasks">${TASKS.map(([n, i, c]) => html`<button class=${c ?? ""} aria-label=${n}><svg width="34" height="34" viewBox="0 0 34 34">${i}</svg></button>`)}</div>
      <div class="tray">
        <svg width="16" height="20" viewBox="0 0 16 20"><path d="M0 7H16V16H0Z" fill="#d0d0d0"/><path d="M2 9H14M2 11H14M4 14H12" stroke="#444" stroke-dasharray="1 1"/><path d="M7 7V4L13 2" stroke="#bbb" fill="none"/></svg>
        <svg width="16" height="20" viewBox="0 1 16 20"><circle cx="8" cy="10" r="7" fill="#1c35c4" stroke="#d8e0f0"/><path d="M6 8Q6 6 8 6T10 8Q10 9 8 10V12M8 13V15" stroke="#fff" stroke-width="2" fill="none"/></svg>
        <svg class="crisp" width="9" height="20" viewBox="0 0 9 20"><path d="M3 3V1H8V5H6M1 4H6V8H1Z" stroke="#fff" fill="none"/><path d="M1 15H8L4.500 19Z" fill="#fff"/></svg>
        <svg width="9" height="16" viewBox="0 0 9 16"><path d="M1 12H8L4.500 8Z" fill="#fff"/></svg>
        <svg width="16" height="18" viewBox="0 0 16 18"><path d="M2 3V18" stroke="#fff" stroke-width="2"/><path d="M4 4H9L10 6H14V11H4Z" fill="#fff"/><circle cx="11" cy="13" r="4.500" fill="#d8281c"/><path d="M9 11L13 15M13 11L9 15" stroke="#fff" stroke-width="2"/></svg>
        <svg width="16" height="16" viewBox="0 0 16 16"><path d="M1 6H4L8 2V16L4 12H1Z" fill="#fff"/><path d="M10 6Q12 9 10 12M12 4Q16 9 12 14" stroke="#fff" fill="none"/></svg>
        <svg width="16" height="16" viewBox="0 0 16 16"><path d="M5 5H15V12H5ZM8 15H13M10 12V15" stroke="#fff" stroke-width="2" fill="none"/><path d="M1 2V5H5V2M3 5V14H6" stroke="#fff" fill="none"/></svg>
      </div>
      <div class="clock"><span>10:53</span><span>2022/12/22</span></div>
      <button class="peek" aria-label="Show desktop"></button>`;
  }
}

@customElement("app-root")
class AppRoot extends LitElement {
  static styles = [bevel, css`
    :host { display: flex; flex-direction: column; min-height: 100vh; background: #000; }
    .window { flex: 1; display: flex; flex-direction: column; padding: 0 8px 7px 0;
      background: linear-gradient(90deg, #8fb4e8, #7ea6e0) bottom / 100% 7px no-repeat, linear-gradient(#5d84b8 0, #8fb4e8 15%, #a9c6f0 38%, #5582c4 45%, #7fa5dc 100%) right / 8px 100% no-repeat; }
    .title { height: 22px; flex: none; display: flex; align-items: flex-start; gap: 6px; margin-right: -8px; overflow: hidden; border-bottom: 1px solid #b8c8dc;
      background: radial-gradient(ellipse 16px 14px at 1419px 12px, #3a86c8 0, transparent 100%), radial-gradient(ellipse 30px 18px at 1484px 14px, #76a4e8 0, transparent 100%), radial-gradient(ellipse 32px 18px at 1560px 14px, #78a8dc 0, transparent 100%), radial-gradient(ellipse 26px 14px at 1712px 18px, #b8455e 0, transparent 100%), radial-gradient(ellipse 60px 18px at 880px 14px, #6d97d0 0, transparent 100%), radial-gradient(ellipse 40px 18px at 1250px 14px, #6d97d0 0, transparent 100%),
        linear-gradient(90deg, #b9c3d6 0, #8fa8cf 180px, #6f94c8 360px, #3a64a4 440px, #5b84c0 530px, #123a68 600px, #12386e 760px, #3c68a8 880px, #14407c 1000px, #0d2f66 1420px, #12356e 1800px, #6a8fc2 1900px);
      font: 12px/15px "Open Sans", "Noto Sans", sans-serif; color: #0a0a14; }
    .title span { flex: 1; text-shadow: 0 0 6px #dfe6f2, 0 0 10px #cdd8ea; white-space: nowrap; }
    .caps { display: flex; margin-right: 7px; height: 12px; border: 1px solid #9eb6d8; border-top: 0; border-radius: 0 0 5px 5px; overflow: hidden; }
    .caps button { width: 28px; border: 0; border-right: 1px solid #9eb6d8; background: #54719f; display: grid; place-items: center; height: 12px; }
    .caps button:last-child { width: 46px; border-right: 0; }
    .work { flex: 1; display: flex; min-height: 0; }
  `];
  render() {
    return html`
      <div class="window">
        <div class="title">
          <svg width="8" height="14" viewBox="0 0 8 14"><rect width="8" height="14" fill="#222"/><rect width="7" height="13" fill="#fff"/><path d="M-2 4L5 11M5 4L-2 11" stroke="#b8a80c" stroke-width="2"/></svg>
          <span>Graphic Editor 9.07b2 (00@HY-HYCAM-PC411 - Windows, pid:6924)</span>
          <div class="caps">
            <button aria-label="Minimize"><svg width="12" height="10" viewBox="0 0 12 10"><rect x="1" y="4" width="10" height="3" fill="#fff"/></svg></button>
            <button aria-label="Maximize"><svg width="12" height="10" viewBox="0 0 12 10"><rect x="2" y="-1" width="8" height="7" fill="none" stroke="#fff" stroke-width="2"/></svg></button>
            <button aria-label="Close"><svg width="12" height="10" viewBox="0 0 12 10"><path d="M2 -2L10 7M10 -2L2 7" stroke="#fff" stroke-width="3"/></svg></button>
          </div>
        </div>
        <app-header></app-header>
        <div class="work">
          <layer-panel></layer-panel>
          <board-stage></board-stage>
          <tool-dock></tool-dock>
        </div>
        <status-row></status-row>
      </div>
      <task-bar></task-bar>`;
  }
}
